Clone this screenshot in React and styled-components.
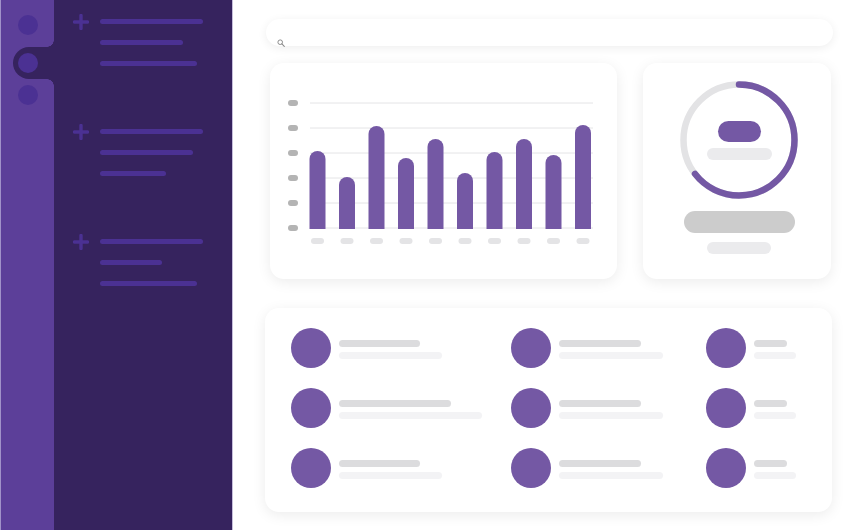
import React from 'react'
import styled, { createGlobalStyle } from 'styled-components'

const GlobalStyle = createGlobalStyle`
    html, body {
        margin: 0;
        padding: 0;
        background: #ffffff;
        font-family: "Liberation Sans", Arial, sans-serif;
    }
`

const PURPLE = '#7458a4'

const navGroups = [
    [103, 83, 97],
    [103, 93, 66],
    [103, 62, 97],
]

const bars = [88, 114, 63, 95, 76, 110, 89, 76, 92, 62]

const people = [
    [81, 103], [82, 104], [33, 42],
    [112, 143], [82, 104], [33, 42],
    [81, 103], [82, 104], [33, 42],
]

const PlusIcon = () => (
    <svg width="16" height="16" viewBox="0 0 16 16">
        <path d="M8 1.5v13M1.5 8h13" stroke="#4b3193" strokeWidth="3.4" strokeLinecap="round" />
    </svg>
)

const SearchIcon = () => (
    <svg width="8" height="8" viewBox="0 0 8 8">
        <circle cx="3.2" cy="3.2" r="2.3" fill="none" stroke="#8c8c8c" strokeWidth="1" />
        <path d="M4.9 4.9L7.3 7.3" stroke="#8c8c8c" strokeWidth="1.1" strokeLinecap="round" />
    </svg>
)

const BarChart = () => {
    const grid = [40, 65, 90, 115, 140, 165]
    return (
        <svg width="347" height="216" viewBox="0 0 347 216">
            {grid.map((y) => (
                <g key={y}>
                    <line x1="40" x2="323" y1={y} y2={y} stroke="#e4e4e6" strokeWidth="1" />
                    <rect x="18" y={y - 3} width="10" height="6" rx="3" fill="#b4b4b4" />
                </g>
            ))}
            {bars.map((top, i) => {
                const x = 39.5 + i * 29.5
                const w = 16
                const b = 166
                return (
                    <g key={i}>
                        <path
                            d={`M${x} ${b} V${top + 8} A8 8 0 0 1 ${x + w} ${top + 8} V${b} Z`}
                            fill={PURPLE}
                        />
                        <rect x={x + 1.5} y="175" width="13" height="6" rx="3" fill="#e4e4e6" />
                    </g>
                )
            })}
        </svg>
    )
}

const Ring = () => {
    const r = 55.5
    const c = 2 * Math.PI * r
    const arc = (c * 232) / 360
    return (
        <svg width="118" height="118" viewBox="0 0 118 118">
            <circle cx="59" cy="59" r={r} fill="none" stroke="#e3e3e5" strokeWidth="6.5" />
            <circle
                cx="59"
                cy="59"
                r={r}
                fill="none"
                stroke={PURPLE}
                strokeWidth="6.5"
                strokeLinecap="round"
                strokeDasharray={`${arc} ${c}`}
                transform="rotate(-90 59 59)"
            />
        </svg>
    )
}

export default function App() {
    return (
        <>
            <GlobalStyle />
            <Page>
                <Rail>
                    <Dot $alone />
                    <Notch>
                        <Dot />
                    </Notch>
                    <Dot $alone />
                </Rail>

                <NavPanel>
                    {navGroups.map((group, i) => (
                        <NavGroup key={i}>
                            <PlusWrap>
                                <PlusIcon />
                            </PlusWrap>
                            <NavLines>
                                {group.map((w, j) => (
                                    <NavLine key={j} $w={w} />
                                ))}
                            </NavLines>
                        </NavGroup>
                    ))}
                </NavPanel>

                <Main>
                    <SearchBar>
                        <SearchIcon />
                    </SearchBar>

                    <CardsRow>
                        <ChartCard>
                            <BarChart />
                        </ChartCard>

                        <StatCard>
                            <Gauge>
                                <Ring />
                                <GaugeInner>
                                    <Pill $w={43} $h={21} $bg={PURPLE} />
                                    <Pill $w={65} $h={12} $bg="#ebebed" />
                                </GaugeInner>
                            </Gauge>
                            <Pill $w={111} $h={22} $bg="#cccccc" $mt={12} />
                            <Pill $w={64} $h={12} $bg="#ebebed" $mt={9} />
                        </StatCard>
                    </CardsRow>

                    <ListCard>
                        {people.map(([a, b], i) => (
                            <Person key={i}>
                                <Avatar />
                                <PersonLines>
                                    <Pill $w={a} $h={7} $bg="#dcdcde" />
                                    <Pill $w={b} $h={7} $bg="#f3f3f5" />
                                </PersonLines>
                            </Person>
                        ))}
                    </ListCard>
                </Main>
            </Page>
        </>
    )
}

const Page = styled.div`
    display: flex;
    width: 858px;
    height: 530px;
    overflow: hidden;
`

const Rail = styled.div`
    width: 53px;
    flex-shrink: 0;
    display: flex;
    flex-direction: column;
    padding-top: 15px;
    background: #5c3f99;
    border-left: 1px solid #a192c9;
`

const Dot = styled.div`
    width: 20px;
    height: 20px;
    border-radius: 50%;
    background: #4b3193;
    margin-left: ${(p) => (p.$alone ? '17px' : '0')};
`

const Notch = styled.div`
    position: relative;
    display: flex;
    align-items: center;
    height: 32px;
    margin: 12px 0 6px 12px;
    padding-left: 5px;
    background: #36235e;
    border-radius: 16px 0 0 16px;

    &::before,
    &::after {
        content: '';
        position: absolute;
        right: 0;
        width: 7px;
        height: 7px;
    }
    &::before {
        top: -7px;
        background: radial-gradient(circle at 0 0, transparent 6.5px, #36235e 7px);
    }
    &::after {
        bottom: -7px;
        background: radial-gradient(circle at 0 100%, transparent 6.5px, #36235e 7px);
    }
`

const NavPanel = styled.div`
    width: 179px;
    flex-shrink: 0;
    display: flex;
    flex-direction: column;
    gap: 63px;
    padding: 19px 0 0 19px;
    box-sizing: border-box;
    background: #36235e;
    border-right: 1px solid #c6bedb;
`

const NavGroup = styled.div`
    display: flex;
    align-items: flex-start;
    gap: 11px;
`

const PlusWrap = styled.div`
    display: flex;
    margin-top: -5px;
`

const NavLines = styled.div`
    display: flex;
    flex-direction: column;
    gap: 16px;
`

const NavLine = styled.div`
    width: ${(p) => p.$w}px;
    height: 5px;
    border-radius: 3px;
    background: #4b3193;
`

const Main = styled.div`
    flex: 1;
    display: flex;
    flex-direction: column;
    padding: 19px 25px 0 33px;
    background: #ffffff;
`

const SearchBar = styled.div`
    width: 567px;
    height: 27px;
    box-sizing: border-box;
    display: flex;
    align-items: flex-end;
    padding: 0 0 0 11px;
    border-radius: 14px;
    background: #ffffff;
    box-shadow: 0 2px 10px rgba(0, 0, 0, 0.07);

    svg {
        margin-bottom: -1px;
    }
`

const CardsRow = styled.div`
    display: flex;
    gap: 26px;
    margin-top: 17px;
    padding-left: 4px;
`

const Card = styled.div`
    background: #ffffff;
    border-radius: 14px;
    box-shadow: 0 3px 14px rgba(0, 0, 0, 0.08);
`

const ChartCard = styled(Card)`
    width: 347px;
    height: 216px;

    svg {
        display: block;
    }
`

const StatCard = styled(Card)`
    width: 188px;
    height: 216px;
    box-sizing: border-box;
    display: flex;
    flex-direction: column;
    align-items: center;
    padding: 18px 0 0 4px;
`

const Gauge = styled.div`
    display: grid;
    width: 118px;
    height: 118px;

    & > * {
        grid-area: 1 / 1;
    }
`

const GaugeInner = styled.div`
    display: flex;
    flex-direction: column;
    align-items: center;
    justify-content: center;
    gap: 6px;
`

const Pill = styled.div`
    width: ${(p) => p.$w}px;
    height: ${(p) => p.$h}px;
    border-radius: ${(p) => p.$h / 2}px;
    background: ${(p) => p.$bg};
    margin-top: ${(p) => p.$mt || 0}px;
    flex-shrink: 0;
`

const ListCard = styled(Card)`
    width: 567px;
    height: 204px;
    box-sizing: border-box;
    margin: 29px 0 0 -1px;
    padding: 20px 0 0 26px;
    display: grid;
    grid-template-columns: 220px 195px 1fr;
    grid-auto-rows: 40px;
    row-gap: 20px;
`

const Person = styled.div`
    display: flex;
    align-items: center;
    gap: 8px;
`

const Avatar = styled.div`
    width: 40px;
    height: 40px;
    border-radius: 50%;
    background: ${PURPLE};
    flex-shrink: 0;
`

const PersonLines = styled.div`
    display: flex;
    flex-direction: column;
    gap: 5px;
    padding-top: 3px;
`
